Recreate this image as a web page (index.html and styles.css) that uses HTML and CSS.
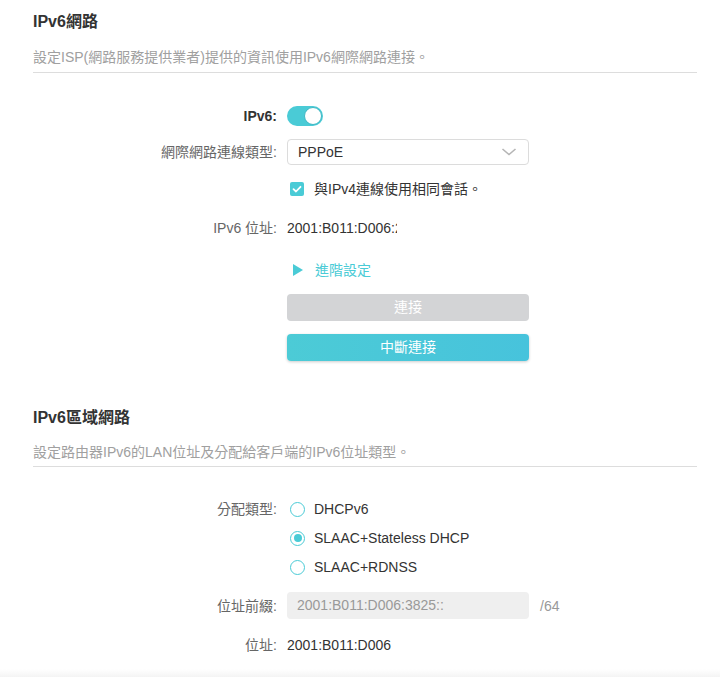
FILE: index.html
```html
<!DOCTYPE html>
<html lang="zh-Hant">
<head>
<meta charset="utf-8">
<title>IPv6</title>
<link rel="stylesheet" href="styles.css">
</head>
<body>
<div class="page">
  <section class="sec sec1">
    <h2 class="title">IPv6網路</h2>
    <p class="desc">設定ISP(網路服務提供業者)提供的資訊使用IPv6網際網路連接。</p>
    <div class="row r-toggle">
      <div class="label strong">IPv6:</div>
      <div class="ctrl"><span class="toggle"><span class="knob"></span></span></div>
    </div>
    <div class="row r-select">
      <div class="label">網際網路連線類型:</div>
      <div class="ctrl">
        <div class="select">
          <span>PPPoE</span>
          <svg class="chev" width="16" height="10" viewBox="0 0 16 10"><path d="M1.5 2 L8 7.5 L14.5 2" fill="none" stroke="#b5b5b5" stroke-width="1.6"/></svg>
        </div>
      </div>
    </div>
    <div class="row r-check">
      <div class="label"></div>
      <div class="ctrl check-line">
        <span class="checkbox"><svg width="14" height="14" viewBox="0 0 14 14"><path d="M3.5 7.2 L6 9.5 L10.5 4.8" fill="none" stroke="#fff" stroke-width="1.8" stroke-linecap="round" stroke-linejoin="round"/></svg></span>
        <span class="value">與IPv4連線使用相同會話。</span>
      </div>
    </div>
    <div class="row r-addr">
      <div class="label">IPv6 位址:</div>
      <div class="ctrl"><span class="value clip">2001:B011:D006:2</span></div>
    </div>
    <div class="row r-adv">
      <div class="label"></div>
      <div class="ctrl adv">
        <svg class="tri" width="10" height="12" viewBox="0 0 10 12"><path d="M0 0 L10 6 L0 12 Z" fill="#4acbd6"/></svg>
        <span>進階設定</span>
      </div>
    </div>
    <div class="row r-btn1">
      <div class="label"></div>
      <div class="ctrl"><div class="btn btn-gray">連接</div></div>
    </div>
    <div class="row r-btn2">
      <div class="label"></div>
      <div class="ctrl"><div class="btn btn-cyan">中斷連接</div></div>
    </div>
  </section>

  <section class="sec sec2">
    <h2 class="title">IPv6區域網路</h2>
    <p class="desc">設定路由器IPv6的LAN位址及分配給客戶端的IPv6位址類型。</p>
    <div class="row r-radio1">
      <div class="label">分配類型:</div>
      <div class="ctrl radio-line"><span class="radio"></span><span class="value">DHCPv6</span></div>
    </div>
    <div class="row r-radio">
      <div class="label"></div>
      <div class="ctrl radio-line"><span class="radio on"></span><span class="value">SLAAC+Stateless DHCP</span></div>
    </div>
    <div class="row r-radio">
      <div class="label"></div>
      <div class="ctrl radio-line"><span class="radio"></span><span class="value">SLAAC+RDNSS</span></div>
    </div>
    <div class="row r-prefix">
      <div class="label">位址前綴:</div>
      <div class="ctrl prefix-line">
        <div class="input-dis">2001:B011:D006:3825::</div>
        <span class="suffix">/64</span>
      </div>
    </div>
    <div class="row r-addr2">
      <div class="label">位址:</div>
      <div class="ctrl"><span class="value">2001:B011:D006</span></div>
    </div>
  </section>
  <div class="footer-shadow"></div>
</div>
</body>
</html>
```

FILE: styles.css
```css
html, body {
  margin: 0;
  padding: 0;
  background: #fff;
}
body {
  font-family: "Liberation Sans", Arial, "Noto Sans CJK TC", sans-serif;
  font-size: 14px;
  color: #333;
  width: 720px;
  height: 677px;
  overflow: hidden;
}
.page {
  display: flex;
  flex-direction: column;
  height: 677px;
}
.sec {
  padding: 0 23px 0 33px;
}
.sec1 { padding-top: 12px; }
.sec2 { padding-top: 47px; }
.title {
  margin: 0;
  font-size: 16px;
  line-height: 20px;
  font-weight: bold;
  color: #333;
}
.desc {
  margin: 15px 0 0;
  font-size: 14px;
  line-height: 20px;
  color: #a0a0a0;
  padding-bottom: 5px;
  border-bottom: 1px solid #ddd;
}
.sec2 .desc {
  margin-top: 14px;
  padding-bottom: 4px;
}
.row {
  display: flex;
  align-items: center;
  gap: 10px;
}
.label {
  width: 244px;
  flex: none;
  text-align: right;
  color: #666;
  line-height: 20px;
  white-space: nowrap;
}
.label.strong {
  font-weight: bold;
  color: #333;
}
.ctrl {
  width: 242px;
  display: flex;
  align-items: center;
  line-height: 20px;
}
.value {
  color: #333;
  white-space: nowrap;
}
.clip {
  display: inline-block;
  width: 110px;
  overflow: hidden;
}
.r-toggle { margin-top: 33px; height: 20px; }
.r-select { margin-top: 13px; height: 26px; }
.r-check { margin-top: 14px; height: 20px; }
.r-addr { margin-top: 19px; height: 20px; }
.r-adv { margin-top: 22px; height: 20px; }
.r-btn1 { margin-top: 14px; height: 27px; }
.r-btn2 { margin-top: 13px; height: 27px; }
.r-radio1 { margin-top: 32px; height: 20px; }
.r-radio { margin-top: 9px; height: 20px; }
.r-prefix { margin-top: 15px; height: 27px; }
.r-addr2 { margin-top: 16px; height: 20px; }

.toggle {
  width: 36px;
  height: 20px;
  border-radius: 10px;
  background: #4acbd6;
  position: relative;
  display: block;
}
.knob {
  position: absolute;
  right: 1px;
  top: 1px;
  width: 16px;
  height: 16px;
  border-radius: 50%;
  background: #fff;
  border: 1px solid #3fb8c4;
}
.select {
  box-sizing: border-box;
  width: 242px;
  height: 26px;
  border: 1px solid #dcdcdc;
  border-radius: 4px;
  display: flex;
  align-items: center;
  justify-content: space-between;
  padding: 0 11px 0 10px;
  color: #333;
}
.check-line { gap: 10px; padding-left: 3px; }
.checkbox {
  width: 14px;
  height: 14px;
  border-radius: 2px;
  background: #4acbd6;
  display: block;
  flex: none;
}
.checkbox svg { display: block; }
.adv {
  gap: 12px;
  padding-left: 6px;
  color: #4acbd6;
}
.tri { display: block; flex: none; }
.btn {
  width: 242px;
  height: 27px;
  border-radius: 4px;
  color: #fff;
  text-align: center;
  line-height: 27px;
}
.btn-gray { background: #d3d4d6; }
.btn-cyan {
  background: linear-gradient(90deg, #4ccbd6, #47c3dc);
  box-shadow: 0 1px 3px rgba(0,0,0,0.2);
}
.radio-line { gap: 9px; padding-left: 3px; }
.radio {
  box-sizing: border-box;
  width: 15px;
  height: 15px;
  border-radius: 50%;
  border: 1.5px solid #4acbd6;
  flex: none;
  display: flex;
  align-items: center;
  justify-content: center;
}
.radio.on::after {
  content: "";
  width: 8px;
  height: 8px;
  border-radius: 50%;
  background: #4acbd6;
}
.prefix-line {
  width: auto;
  gap: 11px;
}
.input-dis {
  box-sizing: border-box;
  width: 242px;
  height: 27px;
  line-height: 27px;
  border-radius: 4px;
  background: #efefef;
  color: #999;
  padding-left: 10px;
}
.suffix { color: #999; }
.footer-shadow {
  margin-top: auto;
  height: 8px;
  background: linear-gradient(#fff, #f4f4f4);
}
```
